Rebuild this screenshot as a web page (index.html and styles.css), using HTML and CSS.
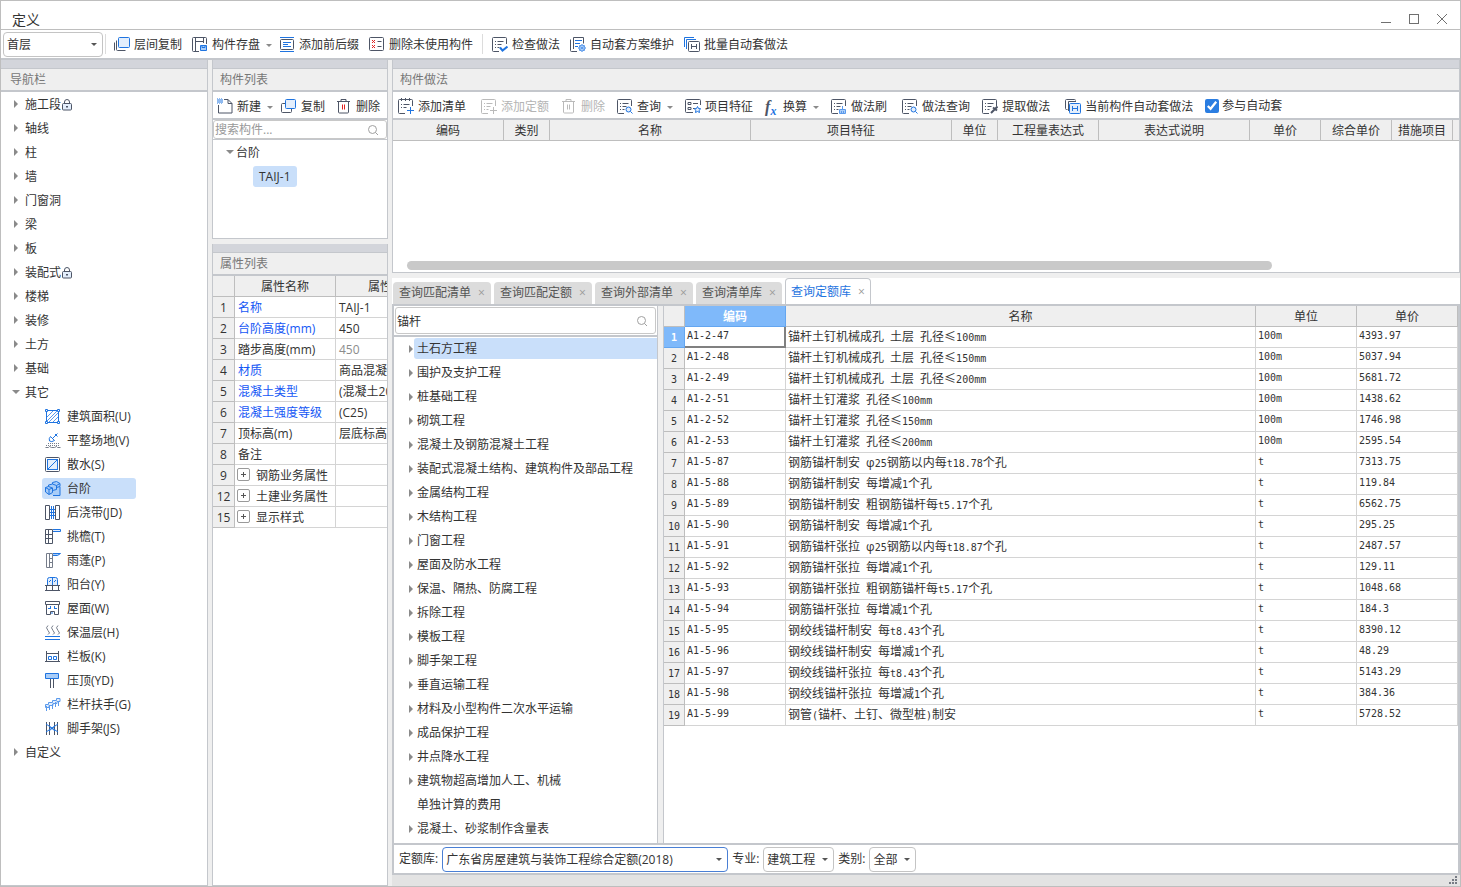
FILE: index.html
```html
<!DOCTYPE html>
<html lang="zh-CN">
<head>
<meta charset="utf-8">
<title>定义</title>
<link rel="stylesheet" href="styles.css">
</head>
<body>
<svg class="sprite" aria-hidden="true">
  <symbol id="i-layercopy" viewBox="0 0 16 16"><path class="d" d="M2.500 4.500v9q0 1 1 1h8M.5 6.500v8"/><rect class="b f" x="4.500" y="1.500" width="11" height="10" rx="1"/></symbol>
  <symbol id="i-save" viewBox="0 0 16 16"><path class="d" d="M7 15.500H1.500q-1 0-1-1v-12q0-1 1-1h12q1 0 1 1V8M3.500 2v13M3.500 5.500h8M11.500 2v5"/><path class="b f2" d="M8.500 9.500h6v5h-6z"/><path class="b" d="M10 9.500v2h3v-2"/></symbol>
  <symbol id="i-affix" viewBox="0 0 16 16"><path class="b" d="M1 1.500h14M1 15.500h14M4 6.500h8M4 8.500h5M4 10.500h8"/><rect class="d" x="1.500" y="3.500" width="13" height="10" rx="1"/></symbol>
  <symbol id="i-unused" viewBox="0 0 16 16"><rect class="d" x=".5" y="1.500" width="14" height="13" rx="1"/><path class="r" d="M3 4l3 3M6 4l-3 3M3 9l3 3M6 9l-3 3"/><path class="d" d="M8.500 5.500h4M8.500 10.500h4"/></symbol>
  <symbol id="i-form" viewBox="0 0 16 16"><path class="d" d="M7 15.500H1.500q-1 0-1-1v-12q0-1 1-1h12q1 0 1 1V8M3 5.500h1M3 8.500h1M3 11.500h1M5.500 5.500h6M5.500 8.500h4M5.500 11.500h2"/></symbol>
  <symbol id="i-check" viewBox="0 0 16 16"><use href="#i-form"/><path class="b w" d="M8 11.500l2.500 3 5-4"/></symbol>
  <symbol id="i-plan" viewBox="0 0 16 16"><path class="d" d="M7 15.500H1.500q-1 0-1-1V3.500M3.500 13V1.500h10v6"/><path class="b" d="M5 4.500h7M5 7.500h5M5 10.500h3"/><circle class="bl" cx="12" cy="12" r="3"/><path class="bl" d="M9 9.500l6 5M15 9.500l-6 5M12 8v8M8 12h8"/></symbol>
  <symbol id="i-batch" viewBox="0 0 16 16"><path class="b" d="M.5 11V1.500H10M2.500 13V3.500H12"/><rect class="d" x="4.500" y="5.500" width="11" height="10" rx="1"/><path class="d" d="M7.500 8v5M12.500 8v5M7.500 10.500h5"/></symbol>
  <symbol id="i-new" viewBox="0 0 16 16"><path class="d" d="M7 1.500h4l4 4v9.500H1.500V7M11 1.500v4h4"/><path class="b dash" d="M0 1h5M1 2h5M0 3h5M1 4h5M0 5h5"/></symbol>
  <symbol id="i-copy" viewBox="0 0 16 16"><path class="d" d="M4 5.500H1.500q-1 0-1 1v7q0 1 1 1h8q1 0 1-1V11"/><rect class="b f" x="4.500" y="1.500" width="10" height="9" rx="1"/></symbol>
  <symbol id="i-trashred" viewBox="0 0 16 16"><path class="d" d="M1 3.500h13M5 3V1.500h5V3M2.500 4v10q0 1 1 1h8q1 0 1-1V4"/><path class="r" d="M6.500 6.500v5M8.500 6.500v5"/></symbol>
  <symbol id="i-trashoff" viewBox="0 0 16 16"><path class="d" d="M1 3.500h13M5 3V1.500h5V3M2.500 4v10q0 1 1 1h8q1 0 1-1V4M6.500 6.500v5M8.500 6.500v5"/></symbol>
  <symbol id="i-addlist" viewBox="0 0 16 16"><path class="d" d="M7 15.500H1.500q-1 0-1-1v-12q0-1 1-1h12q1 0 1 1V8M3.500 0v3M7.500 0v3M11.500 0v3M3 6.500h1M3 9.500h1M5.500 6.500h6M5.500 9.500h3"/><path class="b" d="M12.500 9v7M9 12.500h7"/></symbol>
  <symbol id="i-addquota" viewBox="0 0 16 16"><use href="#i-form"/><path class="d" d="M12.500 9v7M9 12.500h7"/></symbol>
  <symbol id="i-query" viewBox="0 0 16 16"><use href="#i-form"/><circle class="b f" cx="11.500" cy="11.500" r="2.500"/><path class="b" d="M13.500 13.500l2 2"/></symbol>
  <symbol id="i-feature" viewBox="0 0 16 16"><path class="d" d="M8 14.500H1.500q-1 0-1-1v-11q0-1 1-1h13q1 0 1 1V7M3 4.500h3v2H3zM3 9.500h3v2H3zM8 5.500h5M8 10.500h2"/><path class="b f" d="M12.500 8.500l1 2 2.200.3-1.600 1.500.4 2.200-2-1-2 1 .4-2.200-1.600-1.500 2.200-.3z"/></symbol>
  <symbol id="i-brush" viewBox="0 0 16 16"><use href="#i-form"/><path class="bl f2" d="M8.500 15.500v-4h6v4zM11.500 8v3M10.500 13v2M12.500 13v2"/></symbol>
  <symbol id="i-extract" viewBox="0 0 16 16"><use href="#i-form"/><path class="d w" d="M9 15l4-4M11 9.500l4 3M13 11l2.500-2.500"/></symbol>
  <symbol id="i-current" viewBox="0 0 16 16"><path class="d" d="M2.500 11.500h-1q-1 0-1-1v-8q0-1 1-1h8q1 0 1 1M3.500 13V3.500H11"/><rect class="b f" x="4.500" y="5.500" width="11" height="10" rx="1"/><path class="b" d="M7.500 8v5M12.500 8v5M7.500 10.500h5"/></symbol>
  <symbol id="i-search" viewBox="0 0 12 12"><circle cx="5.500" cy="5.500" r="4"/><path d="M8.500 8.500l2.500 2.500"/></symbol>
  <symbol id="i-lock" viewBox="0 0 10 12"><rect class="d f" x=".5" y="4.500" width="9" height="6.500" rx="1"/><path class="d" d="M2.500 4V3q0-2.500 2.500-2.500T7.500 3v1M5 7v2M4 7.500h2"/></symbol>
  <symbol id="n-area" viewBox="0 0 16 16"><rect class="b" x="1.500" y="1.500" width="12" height="12"/><path class="bl" d="M2 8l6-6M2 12L12 2M4 13l9-9M8 13l5-5"/><path class="b fw" d="M.5.5h2v2h-2zM12.500.5h2v2h-2zM.5 12.500h2v2h-2zM12.500 12.500h2v2h-2z"/></symbol>
  <symbol id="n-site" viewBox="0 0 16 16"><path class="b" d="M12.500.5L8 5M5.500 3.500l4 4q-3 2-5 .500-1-2.500 1-4.500zM10 1l2.500 2.500"/><path class="d2 dash" d="M3 10.500h11M1 12.500h14"/><path class="d2" d="M.5 14.500h3l1-1 2 1h3l2-1 1 1h3"/></symbol>
  <symbol id="n-apron" viewBox="0 0 16 16"><rect class="d" x=".5" y=".5" width="14" height="14" rx="1"/><rect class="b f" x="2.500" y="2.500" width="10" height="10"/><path class="b" d="M2.500 12.500l10-10"/></symbol>
  <symbol id="n-step" viewBox="0 0 16 16"><path class="f2" d="M3 11L15 3v11H5z"/><path class="b f2" d="M.5 6.500l3-1V4l4-1V1.500l4-1 3.500 2v3l-3.500 1v2l-4 1v2L4 13.500.5 11z"/><path class="b" d="M.5 6.500L4 8.500v5M3.500 5.500L7.500 7v3.500M7.500 3l4 1.500v3M4 8.500L7.500 7M11.500 4.500l3.500-2M8 14.500h7V6"/></symbol>
  <symbol id="n-strip" viewBox="0 0 16 16"><path class="d" d="M.5.5h4v14h-4zM10.500.5h4v14h-4z"/><path class="b" d="M6.500 1v13M8.500 1v13M5 4.500h5M5 10.500h5M5 7.500h5"/></symbol>
  <symbol id="n-eave" viewBox="0 0 16 16"><path class="d" d="M.5.5h7v14h-7zM3.500 1v13M1 5.500h6M1 9.500h6"/><path class="b f" d="M8 .5h7.500v2H8"/></symbol>
  <symbol id="n-canopy" viewBox="0 0 16 16"><path class="d2" d="M1.500.5h6v14h-6zM4.500 1v13M4.500 5.500h3M4.500 9.500h3"/><path class="b f2" d="M8 .5h7.500l-3 2H8"/></symbol>
  <symbol id="n-balcony" viewBox="0 0 16 16"><path class="b f" d="M2.500 8V2.500q0-2 2-2h6q2 0 2 2V8M7.500 1v7M4 5l2-2M9 5l2-2"/><path class="d" d="M0 8.500h15M1.500 9v5M7.500 9v5M13.500 9v5M0 13.500h15"/></symbol>
  <symbol id="n-roof" viewBox="0 0 16 16"><path class="d" d="M.5.5h14v3H.5zM1.500 4v9.500h4v-3h4v3h4V4"/><path class="b" d="M3 7.500h3M9 7.500h3M5.500 5v3M9.500 5v3M7 11v2"/></symbol>
  <symbol id="n-insul" viewBox="0 0 16 16"><path class="d2" d="M3 .5q-3 2 0 5t0 4M8 .5q-3 2 0 5t0 4M13 .5q-3 2 0 5t0 4"/><path class="b" d="M0 11.500h15M0 14.500h15"/></symbol>
  <symbol id="n-rail" viewBox="0 0 16 16"><path class="d" d="M1.500 2v11M13.500 2v11M0 12.500h15M2 4.500h11"/><path class="b" d="M3.500 7.500h3v3h-3zM8.500 7.500h3v3h-3z"/></symbol>
  <symbol id="n-coping" viewBox="0 0 16 16"><path class="b f2" d="M.5.5h13v5H.5z"/><path class="d" d="M5.500 6v9M8.500 6v9"/></symbol>
  <symbol id="n-hand" viewBox="0 0 16 16"><path class="bl f" d="M.5 7.500h3v-2h4v-2h4v-2H15v3h-3v2H8v2H4v2H.5z"/><path class="bl" d="M1.500 9v5M4.500 8v5M7.500 7v5M10.500 5v5M13.500 4v5"/></symbol>
  <symbol id="n-scaf" viewBox="0 0 16 16"><path class="d" d="M1.500 1v13M4.500 1v13M9.500 1v13M12.500 1v13"/><path class="b" d="M1 3l12 8M1 11l12-8M4 5l6 5M4 10l6-5"/></symbol>
</svg>

<div class="window">
  <header class="titlebar">
    <h1>定义</h1>
    <div class="winbtns">
      <button type="button" aria-label="最小化"><svg viewBox="0 0 12 12"><path d="M1 9.500h10"/></svg></button>
      <button type="button" aria-label="最大化"><svg viewBox="0 0 12 12"><rect x="1.500" y="1.500" width="9" height="9"/></svg></button>
      <button type="button" aria-label="关闭"><svg viewBox="0 0 12 12"><path d="M1 1l10 10M11 1L1 11"/></svg></button>
    </div>
  </header>

  <div class="mainbar">
    <span class="combo floor"><select aria-label="楼层"><option>首层</option></select></span>
    <span class="sep"></span>
    <div class="tools">
      <button type="button" class="tool"><svg class="ic"><use href="#i-layercopy"/></svg>层间复制</button>
      <button type="button" class="tool more"><svg class="ic"><use href="#i-save"/></svg>构件存盘</button>
      <button type="button" class="tool"><svg class="ic"><use href="#i-affix"/></svg>添加前后缀</button>
      <button type="button" class="tool"><svg class="ic"><use href="#i-unused"/></svg>删除未使用构件</button>
      <span class="sep"></span>
      <button type="button" class="tool"><svg class="ic"><use href="#i-check"/></svg>检查做法</button>
      <button type="button" class="tool"><svg class="ic"><use href="#i-plan"/></svg>自动套方案维护</button>
      <button type="button" class="tool"><svg class="ic"><use href="#i-batch"/></svg>批量自动套做法</button>
    </div>
  </div>

  <main class="workspace">
    <nav class="panel nav">
      <div class="grip"></div>
      <h2>导航栏</h2>
      <ul class="tree">
        <li><button type="button" class="node">施工段<svg class="lock"><use href="#i-lock"/></svg></button></li>
        <li><button type="button" class="node">轴线</button></li>
        <li><button type="button" class="node">柱</button></li>
        <li><button type="button" class="node">墙</button></li>
        <li><button type="button" class="node">门窗洞</button></li>
        <li><button type="button" class="node">梁</button></li>
        <li><button type="button" class="node">板</button></li>
        <li><button type="button" class="node">装配式<svg class="lock"><use href="#i-lock"/></svg></button></li>
        <li><button type="button" class="node">楼梯</button></li>
        <li><button type="button" class="node">装修</button></li>
        <li><button type="button" class="node">土方</button></li>
        <li><button type="button" class="node">基础</button></li>
        <li><button type="button" class="node open">其它</button>
          <ul class="kids">
            <li><button type="button" class="leaf"><svg class="ic"><use href="#n-area"/></svg>建筑面积(U)</button></li>
            <li><button type="button" class="leaf"><svg class="ic"><use href="#n-site"/></svg>平整场地(V)</button></li>
            <li><button type="button" class="leaf"><svg class="ic"><use href="#n-apron"/></svg>散水(S)</button></li>
            <li><button type="button" class="leaf current"><svg class="ic"><use href="#n-step"/></svg>台阶</button></li>
            <li><button type="button" class="leaf"><svg class="ic"><use href="#n-strip"/></svg>后浇带(JD)</button></li>
            <li><button type="button" class="leaf"><svg class="ic"><use href="#n-eave"/></svg>挑檐(T)</button></li>
            <li><button type="button" class="leaf"><svg class="ic"><use href="#n-canopy"/></svg>雨蓬(P)</button></li>
            <li><button type="button" class="leaf"><svg class="ic"><use href="#n-balcony"/></svg>阳台(Y)</button></li>
            <li><button type="button" class="leaf"><svg class="ic"><use href="#n-roof"/></svg>屋面(W)</button></li>
            <li><button type="button" class="leaf"><svg class="ic"><use href="#n-insul"/></svg>保温层(H)</button></li>
            <li><button type="button" class="leaf"><svg class="ic"><use href="#n-rail"/></svg>栏板(K)</button></li>
            <li><button type="button" class="leaf"><svg class="ic"><use href="#n-coping"/></svg>压顶(YD)</button></li>
            <li><button type="button" class="leaf"><svg class="ic"><use href="#n-hand"/></svg>栏杆扶手(G)</button></li>
            <li><button type="button" class="leaf"><svg class="ic"><use href="#n-scaf"/></svg>脚手架(JS)</button></li>
          </ul>
        </li>
        <li><button type="button" class="node">自定义</button></li>
      </ul>
    </nav>

    <div class="middle">
      <section class="panel parts">
        <div class="grip"></div>
        <h2>构件列表</h2>
        <div class="subbar">
          <button type="button" class="tool more"><svg class="ic"><use href="#i-new"/></svg>新建</button>
          <button type="button" class="tool"><svg class="ic"><use href="#i-copy"/></svg>复制</button>
          <button type="button" class="tool"><svg class="ic"><use href="#i-trashred"/></svg>删除</button>
        </div>
        <div class="search"><input type="text" placeholder="搜索构件..." aria-label="搜索构件"><svg><use href="#i-search"/></svg></div>
        <ul class="parttree">
          <li><button type="button" class="node open">台阶</button>
            <ul><li><button type="button" class="part">TAIJ-1</button></li></ul>
          </li>
        </ul>
      </section>
      <section class="panel props">
        <div class="grip"></div>
        <h2>属性列表</h2>
        <div class="clip">
          <table class="proptable">
            <colgroup><col class="c22"><col class="c101"><col class="c101"></colgroup>
            <thead><tr><th></th><th>属性名称</th><th>属性值</th></tr></thead>
            <tbody>
              <tr><th>1</th><td class="link">名称</td><td>TAIJ-1</td></tr>
              <tr><th>2</th><td class="link">台阶高度(mm)</td><td>450</td></tr>
              <tr><th>3</th><td>踏步高度(mm)</td><td class="mute">450</td></tr>
              <tr><th>4</th><td class="link">材质</td><td>商品混凝土</td></tr>
              <tr><th>5</th><td class="link">混凝土类型</td><td>(混凝土20石)</td></tr>
              <tr><th>6</th><td class="link">混凝土强度等级</td><td>(C25)</td></tr>
              <tr><th>7</th><td>顶标高(m)</td><td>层底标高</td></tr>
              <tr><th>8</th><td>备注</td><td></td></tr>
              <tr><th>9</th><td><button type="button" class="plus" aria-label="展开"></button>钢筋业务属性</td><td></td></tr>
              <tr><th>12</th><td><button type="button" class="plus" aria-label="展开"></button>土建业务属性</td><td></td></tr>
              <tr><th>15</th><td><button type="button" class="plus" aria-label="展开"></button>显示样式</td><td></td></tr>
            </tbody>
          </table>
        </div>
      </section>
    </div>

    <div class="right">
      <section class="panel method">
        <div class="grip"></div>
        <h2>构件做法</h2>
        <div class="subbar groups">
          <div class="group">
            <button type="button" class="tool"><svg class="ic"><use href="#i-addlist"/></svg>添加清单</button>
          </div>
          <div class="group">
            <button type="button" class="tool" disabled><svg class="ic"><use href="#i-addquota"/></svg>添加定额</button>
            <button type="button" class="tool" disabled><svg class="ic"><use href="#i-trashoff"/></svg>删除</button>
            <button type="button" class="tool more"><svg class="ic"><use href="#i-query"/></svg>查询</button>
            <button type="button" class="tool"><svg class="ic"><use href="#i-feature"/></svg>项目特征</button>
            <button type="button" class="tool more"><span class="fx">f<sub>x</sub></span>换算</button>
            <button type="button" class="tool"><svg class="ic"><use href="#i-brush"/></svg>做法刷</button>
          </div>
          <div class="group">
            <button type="button" class="tool"><svg class="ic"><use href="#i-query"/></svg>做法查询</button>
            <button type="button" class="tool"><svg class="ic"><use href="#i-extract"/></svg>提取做法</button>
          </div>
          <div class="group">
            <button type="button" class="tool"><svg class="ic"><use href="#i-current"/></svg>当前构件自动套做法</button>
            <label class="tick"><input type="checkbox" checked>参与自动套</label>
          </div>
        </div>
        <table class="methodtable">
          <colgroup><col class="c111"><col class="c46"><col class="c201"><col class="c201"><col class="c46"><col class="c101"><col class="c151"><col class="c71"><col class="c71"><col class="c61"><col></colgroup>
          <thead><tr><th>编码</th><th>类别</th><th>名称</th><th>项目特征</th><th>单位</th><th>工程量表达式</th><th>表达式说明</th><th>单价</th><th>综合单价</th><th>措施项目</th><th></th></tr></thead>
        </table>
        <div class="hscroll"><div class="thumb"></div></div>
      </section>

      <section class="lookup">
        <div class="tabs">
          <div class="tab"><button type="button">查询匹配清单</button><button type="button" class="x" aria-label="关闭">×</button></div>
          <div class="tab"><button type="button">查询匹配定额</button><button type="button" class="x" aria-label="关闭">×</button></div>
          <div class="tab"><button type="button">查询外部清单</button><button type="button" class="x" aria-label="关闭">×</button></div>
          <div class="tab"><button type="button">查询清单库</button><button type="button" class="x" aria-label="关闭">×</button></div>
          <div class="tab active"><button type="button">查询定额库</button><button type="button" class="x" aria-label="关闭">×</button></div>
        </div>
        <div class="frame">
          <div class="split">
            <div class="chapters">
              <div class="search big"><input type="text" value="锚杆" aria-label="搜索定额"><svg><use href="#i-search"/></svg></div>
              <ul>
                <li><button type="button" class="node current">土石方工程</button></li>
                <li><button type="button" class="node">围护及支护工程</button></li>
                <li><button type="button" class="node">桩基础工程</button></li>
                <li><button type="button" class="node">砌筑工程</button></li>
                <li><button type="button" class="node">混凝土及钢筋混凝土工程</button></li>
                <li><button type="button" class="node">装配式混凝土结构、建筑构件及部品工程</button></li>
                <li><button type="button" class="node">金属结构工程</button></li>
                <li><button type="button" class="node">木结构工程</button></li>
                <li><button type="button" class="node">门窗工程</button></li>
                <li><button type="button" class="node">屋面及防水工程</button></li>
                <li><button type="button" class="node">保温、隔热、防腐工程</button></li>
                <li><button type="button" class="node">拆除工程</button></li>
                <li><button type="button" class="node">模板工程</button></li>
                <li><button type="button" class="node">脚手架工程</button></li>
                <li><button type="button" class="node">垂直运输工程</button></li>
                <li><button type="button" class="node">材料及小型构件二次水平运输</button></li>
                <li><button type="button" class="node">成品保护工程</button></li>
                <li><button type="button" class="node">井点降水工程</button></li>
                <li><button type="button" class="node">建筑物超高增加人工、机械</button></li>
                <li><button type="button" class="node single">单独计算的费用</button></li>
                <li><button type="button" class="node">混凝土、砂浆制作含量表</button></li>
              </ul>
            </div>
            <div class="results">
              <table class="quota">
                <colgroup><col class="c21"><col class="c101"><col><col class="c101"><col class="c101"></colgroup>
                <thead><tr><th></th><th class="on">编码</th><th>名称</th><th>单位</th><th>单价</th></tr></thead>
                <tbody>
                  <tr><th class="on">1</th><td class="n sel">A1-2-47</td><td>锚杆土钉机械成孔<i> </i>土层<i> </i>孔径≤<i>100mm</i></td><td class="n">100m</td><td class="n">4393.97</td></tr>
                  <tr><th>2</th><td class="n">A1-2-48</td><td>锚杆土钉机械成孔<i> </i>土层<i> </i>孔径≤<i>150mm</i></td><td class="n">100m</td><td class="n">5037.94</td></tr>
                  <tr><th>3</th><td class="n">A1-2-49</td><td>锚杆土钉机械成孔<i> </i>土层<i> </i>孔径≤<i>200mm</i></td><td class="n">100m</td><td class="n">5681.72</td></tr>
                  <tr><th>4</th><td class="n">A1-2-51</td><td>锚杆土钉灌浆<i> </i>孔径≤<i>100mm</i></td><td class="n">100m</td><td class="n">1438.62</td></tr>
                  <tr><th>5</th><td class="n">A1-2-52</td><td>锚杆土钉灌浆<i> </i>孔径≤<i>150mm</i></td><td class="n">100m</td><td class="n">1746.98</td></tr>
                  <tr><th>6</th><td class="n">A1-2-53</td><td>锚杆土钉灌浆<i> </i>孔径≤<i>200mm</i></td><td class="n">100m</td><td class="n">2595.54</td></tr>
                  <tr><th>7</th><td class="n">A1-5-87</td><td>钢筋锚杆制安<i> </i><b>φ</b><i>25</i>钢筋以内每<i>t18.78</i>个孔</td><td class="n">t</td><td class="n">7313.75</td></tr>
                  <tr><th>8</th><td class="n">A1-5-88</td><td>钢筋锚杆制安<i> </i>每增减<i>1</i>个孔</td><td class="n">t</td><td class="n">119.84</td></tr>
                  <tr><th>9</th><td class="n">A1-5-89</td><td>钢筋锚杆制安<i> </i>粗钢筋锚杆每<i>t5.17</i>个孔</td><td class="n">t</td><td class="n">6562.75</td></tr>
                  <tr><th>10</th><td class="n">A1-5-90</td><td>钢筋锚杆制安<i> </i>每增减<i>1</i>个孔</td><td class="n">t</td><td class="n">295.25</td></tr>
                  <tr><th>11</th><td class="n">A1-5-91</td><td>钢筋锚杆张拉<i> </i><b>φ</b><i>25</i>钢筋以内每<i>t18.87</i>个孔</td><td class="n">t</td><td class="n">2487.57</td></tr>
                  <tr><th>12</th><td class="n">A1-5-92</td><td>钢筋锚杆张拉<i> </i>每增减<i>1</i>个孔</td><td class="n">t</td><td class="n">129.11</td></tr>
                  <tr><th>13</th><td class="n">A1-5-93</td><td>钢筋锚杆张拉<i> </i>粗钢筋锚杆每<i>t5.17</i>个孔</td><td class="n">t</td><td class="n">1048.68</td></tr>
                  <tr><th>14</th><td class="n">A1-5-94</td><td>钢筋锚杆张拉<i> </i>每增减<i>1</i>个孔</td><td class="n">t</td><td class="n">184.3</td></tr>
                  <tr><th>15</th><td class="n">A1-5-95</td><td>钢绞线锚杆制安<i> </i>每<i>t8.43</i>个孔</td><td class="n">t</td><td class="n">8390.12</td></tr>
                  <tr><th>16</th><td class="n">A1-5-96</td><td>钢绞线锚杆制安<i> </i>每增减<i>1</i>个孔</td><td class="n">t</td><td class="n">48.29</td></tr>
                  <tr><th>17</th><td class="n">A1-5-97</td><td>钢绞线锚杆张拉<i> </i>每<i>t8.43</i>个孔</td><td class="n">t</td><td class="n">5143.29</td></tr>
                  <tr><th>18</th><td class="n">A1-5-98</td><td>钢绞线锚杆张拉<i> </i>每增减<i>1</i>个孔</td><td class="n">t</td><td class="n">384.36</td></tr>
                  <tr><th>19</th><td class="n">A1-5-99</td><td>钢管<i>(</i>锚杆、土钉、微型桩<i>)</i>制安</td><td class="n">t</td><td class="n">5728.52</td></tr>
                </tbody>
              </table>
            </div>
          </div>
          <div class="filters">
            <label for="lib">定额库:</label>
            <span class="combo lib"><select id="lib"><option>广东省房屋建筑与装饰工程综合定额(2018)</option></select></span>
            <label for="major">专业:</label>
            <span class="combo major"><select id="major"><option>建筑工程</option></select></span>
            <label for="kind">类别:</label>
            <span class="combo kind"><select id="kind"><option>全部</option></select></span>
          </div>
        </div>
        <footer class="status"><svg viewBox="0 0 9 9"><path d="M6 0h2v2H6zM6 3h2v2H6zM3 3h2v2H3zM6 6h2v2H6zM3 6h2v2H3zM0 6h2v2H0z"/></svg></footer>
      </section>
    </div>
  </main>
</div>
</body>
</html>
```

FILE: styles.css
```css
:root {
  --line: #c4c7cc;
  --edge: #bebebe;
  --cell: #d4d4d4;
  --head: #efefef;
  --pick: #c9dffa;
  --ink: #333333;
  --blue: #1f74e0;
}
* { box-sizing: border-box; }
body, h1, h2, ul { margin: 0; padding: 0; font-weight: 400; }
ul { list-style: none; }
body, button, input, select {
  font-family: "Open Sans", "Noto Sans CJK SC", sans-serif;
  font-size: 12px;
  line-height: 20px;
  color: var(--ink);
}
button { border: 0; padding: 0; margin: 0; background: none; white-space: nowrap; text-align: left; }

/* icon strokes */
.sprite { display: none; }
.d, .d2, .b, .bl, .r { fill: none; stroke-width: 1; }
.d { stroke: #4d5566; }
.d2 { stroke: #767d8a; }
.b { stroke: #1f74e0; }
.bl { stroke: #5b9aec; }
.r { stroke: #e02020; }
.w { stroke-width: 2; }
.f { fill: #e3eefc; }
.f2 { fill: #a9cdf8; }
.fw { fill: #fff; }
.dash { stroke-dasharray: 1 1; }
.ic { width: 16px; height: 16px; flex: none; }

.window {
  display: flex;
  flex-direction: column;
  height: 100vh;
  min-height: 880px;
  border: 1px solid var(--edge);
  background: #fff;
  overflow: hidden;
}
.titlebar {
  display: flex;
  justify-content: space-between;
  align-items: flex-end;
  height: 29px;
  padding: 0 12px 0 11px;
  border-bottom: 1px solid var(--edge);
}
.titlebar h1 { font-size: 14px; line-height: 18px; }
.winbtns { display: flex; gap: 16px; padding-bottom: 4px; }
.winbtns button { width: 12px; height: 12px; display: block; }
.winbtns svg { display: block; width: 12px; height: 12px; fill: none; stroke: #707070; }

.mainbar {
  display: flex;
  align-items: center;
  height: 30px;
  padding: 0 2px;
  border-bottom: 2px solid var(--line);
}
.sep { width: 1px; height: 20px; background: #dcdcdc; }
.mainbar > .sep { margin-left: 2px; }
.tools { display: flex; align-items: center; gap: 10px; padding: 0 8px; }
.tools .sep { margin: 0 -1px; }
.tool { display: flex; align-items: center; gap: 4px; height: 22px; padding-top: 2px; }
.tool .ic { margin-top: -2px; }
.more::after, .combo::after {
  content: "";
  border: 3px solid transparent;
  border-top: 3px solid #8a8a8a;
  border-bottom: 0;
}
.more::after { margin-left: 2px; }
.tools .more, .parts .more { margin-right: -3px; }
.tool:disabled { color: #b4b4b4; }
.tool:disabled .ic { opacity: 0.4; filter: grayscale(1); }

.combo {
  display: flex;
  align-items: center;
  height: 25px;
  border: 1px solid #c4c4c4;
  border-radius: 4px;
  background: #fff;
  padding-right: 5px;
}
.combo::after { border-top-color: #555; margin-left: -6px; pointer-events: none; }
.combo select {
  flex: 1;
  width: 100%;
  height: 100%;
  appearance: none;
  border: 0;
  outline: 0;
  padding: 1px 3px 0;
  background: transparent;
}
.floor { width: 100px; }
.lib { width: 286px; border-color: #4a7fd4; }
.major { width: 71px; }
.kind { width: 47px; }

.workspace {
  flex: 1;
  min-height: 0;
  display: grid;
  grid-template-columns: 207px 176px minmax(0, 1fr);
  gap: 4px;
  background: var(--head);
}
.panel {
  display: flex;
  flex-direction: column;
  min-height: 0;
  background: #fff;
  border: 1px solid var(--line);
  border-top: 0;
}
.grip { height: 9px; flex: none; background: #d3d5db; border-bottom: 1px solid var(--line); }
.panel h2 {
  flex: none;
  height: 23px;
  line-height: 22px;
  padding: 0 7px;
  font-size: 12px;
  color: #777;
  background: var(--head);
  border-bottom: 2px solid var(--line);
}
.panel.nav { border-left: 0; }
.panel.nav h2 { padding-left: 9px; }

/* trees */
.node { position: relative; display: flex; align-items: center; height: 24px; width: 100%; padding: 2px 0 0 24px; }
.node::before {
  content: "";
  position: absolute;
  top: 8px;
  left: 13px;
  border: 4px solid transparent;
  border-left: 4px solid #8a8a8a;
  border-right: 0;
}
.node.open::before { top: 10px; left: 11px; border: 4px solid transparent; border-top-color: #8a8a8a; border-bottom: 0; }
.node.single::before { display: none; }
.lock { width: 10px; height: 12px; margin-left: 1px; }
.kids { padding-left: 41px; }
.kids li { height: 24px; padding-top: 2px; }
.leaf { display: flex; align-items: center; gap: 6px; height: 21px; width: 94px; padding-left: 3px; border-radius: 3px; }
.leaf.current, .part { background: var(--pick); }

.middle { display: flex; flex-direction: column; gap: 5px; min-height: 0; }
.parts { flex: 0 0 179px; }
.props { flex: 1; }
.subbar {
  flex: none;
  display: flex;
  align-items: center;
  gap: 11px;
  height: 28px;
  padding: 2px 4px 0;
  border-bottom: 2px solid var(--line);
}
.search {
  flex: none;
  display: flex;
  align-items: center;
  height: 19px;
  padding-right: 7px;
  border: 1px solid #c8c8c8;
  border-radius: 3px;
}
.search input { flex: 1; min-width: 0; height: 100%; border: 0; outline: 0; padding: 0 1px; background: none; }
.search input::placeholder { color: #999; }
.search svg { width: 12px; height: 12px; fill: none; stroke: #a0a0a0; }
.parttree { border-top: 1px solid var(--line); }
.parttree .node { padding-left: 23px; }
.parttree .node::before { left: 13px; }
.part { height: 21px; padding: 0 6px; margin: 2px 0 0 40px; border-radius: 3px; }

/* tables */
table { border-collapse: separate; border-spacing: 0; table-layout: fixed; width: 100%; }
th, td { height: 21px; padding: 2px 0 0; line-height: 18px; font-weight: 400; white-space: nowrap; overflow: hidden; }
th { background: var(--head); border-right: 1px solid var(--edge); border-bottom: 1px solid var(--edge); text-align: center; }
td { border-right: 1px solid var(--cell); border-bottom: 1px solid var(--cell); }
.c21 { width: 21px; }
.c22 { width: 22px; }
.c46 { width: 46px; }
.c61 { width: 61px; }
.c71 { width: 71px; }
.c101 { width: 101px; }
.c111 { width: 111px; }
.c151 { width: 151px; }
.c201 { width: 201px; }
.clip { overflow: hidden; }
.proptable { width: 224px; }
.proptable td { padding-left: 3px; }
.link { color: #1557f5; }
.mute { color: #8c8c8c; }
.plus {
  display: inline-block;
  vertical-align: middle;
  width: 13px;
  height: 13px;
  margin: -4px 6px 0 -1px;
  border: 1px solid #999;
  border-radius: 2px;
  background:
    linear-gradient(#555, #555) center / 5px 1px no-repeat,
    linear-gradient(#555, #555) center / 1px 5px no-repeat;
}

.right { display: flex; flex-direction: column; gap: 5px; min-height: 0; }
.method { flex: 0 0 213px; }
.groups { gap: 15px; padding: 2px 5px 0; }
.group { display: flex; align-items: center; gap: 12px; }
.fx { width: 14px; font: italic 700 16px/20px "Liberation Serif", serif; color: #4d5566; display: flex; align-items: center; }
.fx sub { font-size: 12px; line-height: 12px; color: var(--blue); align-self: flex-end; }
.tick { display: flex; align-items: center; gap: 3px; white-space: nowrap; }
.tick input { width: 14px; height: 14px; margin: 0; accent-color: #2a7de1; }
.methodtable th:last-child { border-right: 0; }
.hscroll { margin-top: auto; padding: 0 14px 2px; }
.thumb { width: 83.3%; height: 9px; border-radius: 5px; background: #c9c9c9; }

.lookup { flex: 1; min-height: 0; display: flex; flex-direction: column; }
.tabs { display: flex; align-items: flex-end; gap: 3px; height: 26px; padding-left: 1px; background: #fff; }
.tab {
  display: flex;
  align-items: center;
  gap: 7px;
  height: 22px;
  padding: 0 6px;
  background: #dcdcdc;
  border-radius: 4px 4px 0 0;
}
.tab button { color: #555; }
.tab .x { width: 7px; font-size: 12px; color: #999; }
.tab.active { height: 26px; padding: 0 5px; background: #fff; border: 1px solid var(--line); border-bottom: 0; }
.tab.active button:first-child { color: var(--blue); }
.frame { flex: 1; min-height: 0; display: flex; flex-direction: column; border: 2px solid var(--line); background: #fff; }
.split {
  flex: 1;
  min-height: 0;
  display: grid;
  grid-template-columns: 264px minmax(0, 1fr);
  gap: 5px;
  background: var(--head);
}
.chapters { background: #fff; border-right: 1px solid var(--line); overflow: hidden; }
.search.big { height: 27px; margin: 1px 1px 0; padding-right: 7px; }
.chapters ul { margin-top: 1px; border-top: 2px solid var(--line); }
.chapters li { height: 24px; padding-top: 1px; }
.chapters .node { height: 21px; width: auto; min-width: calc(100% - 20px); margin-left: 20px; padding: 0 0 0 3px; border-radius: 3px 0 0 3px; }
.chapters .node::before { top: 7px; left: -5px; }
.chapters .current { background: var(--pick); }
.results { background: #fff; border-left: 1px solid var(--line); overflow: hidden; }
.quota td { font-family: "Noto Sans CJK SC", sans-serif; padding: 0 0 2px 2px; }
.quota .n, .quota i, .quota tbody th { font-family: "DejaVu Sans Mono", monospace; font-size: 10px; font-style: normal; }
.quota i, .quota b { line-height: 0; }
.quota i { white-space: pre; }
.quota b { font-family: "Open Sans", sans-serif; font-weight: 400; }
.quota th.on { background: #7fb9fa; border-color: #64a6f0; color: #fff; font-weight: 700; }
.quota .sel { border-right: 2px solid #808080; border-bottom: 2px solid #808080; padding-bottom: 1px; }

.filters {
  flex: none;
  display: flex;
  align-items: center;
  gap: 4px;
  height: 30px;
  padding: 0 5px;
  border-top: 2px solid var(--line);
}
.status { flex: none; display: flex; justify-content: flex-end; height: 11px; padding: 1px 2px; background: #e3e3e3; }
.status svg { width: 9px; height: 9px; fill: #777c85; }
```
